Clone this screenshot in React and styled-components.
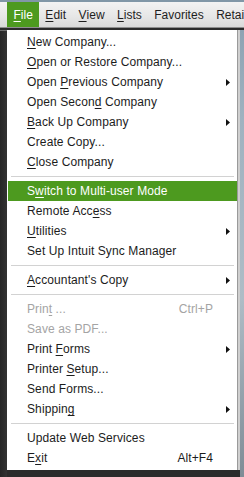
import React from "react";
import styled, { createGlobalStyle } from "styled-components";

const GlobalStyle = createGlobalStyle`
  html, body {
    margin: 0;
    padding: 0;
    background: #2b2b2b;
  }
`;

const menuBar = [
  { label: "File", key: "F", active: true },
  { label: "Edit", key: "E" },
  { label: "View", key: "V" },
  { label: "Lists", key: "L" },
  { label: "Favorites" },
  { label: "Retail" },
];

// each group is separated by a line
const groups = [
  [
    { label: "New Company...", key: 0 },
    { label: "Open or Restore Company...", key: 0 },
    { label: "Open Previous Company", key: 5, sub: true },
    { label: "Open Second Company", key: 10 },
    { label: "Back Up Company", key: 0, sub: true },
    { label: "Create Copy..." },
    { label: "Close Company", key: 0 },
  ],
  [
    { label: "Switch to Multi-user Mode", key: 1, selected: true },
    { label: "Remote Access", key: 10 },
    { label: "Utilities", key: 0, sub: true },
    { label: "Set Up Intuit Sync Manager" },
  ],
  [{ label: "Accountant's Copy", key: 0, sub: true }],
  [
    { label: "Print ...", key: 4, shortcut: "Ctrl+P", disabled: true },
    { label: "Save as PDF...", disabled: true },
    { label: "Print Forms", key: 6, sub: true },
    { label: "Printer Setup...", key: 8 },
    { label: "Send Forms..." },
    { label: "Shipping", key: 7, sub: true },
  ],
  [
    { label: "Update Web Services" },
    { label: "Exit", key: 1, shortcut: "Alt+F4" },
  ],
];

function Mnemonic({ text, index }) {
  if (index === undefined) return text;
  return (
    <>
      {text.slice(0, index)}
      <u>{text[index]}</u>
      {text.slice(index + 1)}
    </>
  );
}

const App = () => {
  return (
    <Screen>
      <GlobalStyle />
      <TopStrip />
      <MenuBar>
        {menuBar.map((m) => (
          <BarItem key={m.label} $active={m.active}>
            <Mnemonic text={m.label} index={m.key ? 0 : undefined} />
          </BarItem>
        ))}
      </MenuBar>
      <Body>
        <LeftEdge>
          <EdgeMark />
        </LeftEdge>
        <Panel>
          {groups.map((group, gi) => (
            <React.Fragment key={gi}>
              {gi > 0 && <Separator />}
              {group.map((item) => (
                <Item
                  key={item.label}
                  $selected={item.selected}
                  $disabled={item.disabled}
                >
                  <Label>
                    <Mnemonic text={item.label} index={item.key} />
                  </Label>
                  <Shortcut>{item.shortcut}</Shortcut>
                  <ArrowCell>
                    {item.sub && (
                      <svg width="4" height="7" viewBox="0 0 4 7">
                        <path d="M0 0 L4 3.5 L0 7 Z" fill="#111" />
                      </svg>
                    )}
                  </ArrowCell>
                </Item>
              ))}
            </React.Fragment>
          ))}
        </Panel>
        <RightEdge />
      </Body>
    </Screen>
  );
};

const Screen = styled.div`
  width: 244px;
  height: 477px;
  overflow: hidden;
  background: #2b2b2b;
  font-family: "Liberation Sans", Arial, sans-serif;
  font-size: 12px;
  display: flex;
  flex-direction: column;
`;

const TopStrip = styled.div`
  height: 2px;
  background: #8197a7;
`;

const MenuBar = styled.div`
  height: 25px;
  display: flex;
  align-items: stretch;
  padding-left: 7px;
  font-size: 12px;
  background: linear-gradient(#f3f3f3, #e6e6e6 60%, #d9d9d9);
  border-bottom: 1px solid #8e8e8e;
  white-space: nowrap;
  overflow: hidden;
`;

const BarItem = styled.div`
  display: flex;
  align-items: center;
  padding: 0 6px 0 6.5px;
  color: ${(p) => (p.$active ? "#ffffff" : "#1e1e1e")};
  background: ${(p) => (p.$active ? "#4d9a1f" : "transparent")};

  u {
    text-decoration-thickness: 1px;
    text-underline-offset: 2px;
  }
`;

const Body = styled.div`
  flex: 1;
  display: flex;
  align-items: flex-start;
  padding-top: 2px;
`;

const LeftEdge = styled.div`
  width: 7px;
  align-self: stretch;
  background: linear-gradient(90deg, #262626, #333333);
`;

const EdgeMark = styled.div`
  height: 1px;
  background: #6d6d6d;
`;

const Panel = styled.div`
  width: 229px;
  background: #ffffff;
  padding: 2px 0 2px 1px;
  border-right: 1px solid #9a9a9a;
  box-shadow: 2px 0 0 #cfcfcf;
`;

const Item = styled.div`
  height: 20px;
  display: grid;
  grid-template-columns: 1fr auto 24px;
  align-items: center;
  padding-left: 19px;
  letter-spacing: 0.1px;
  color: ${(p) =>
    p.$selected ? "#ffffff" : p.$disabled ? "#a4a4a4" : "#1c1c1c"};
  background: ${(p) => (p.$selected ? "#4d9a1f" : "transparent")};

  u {
    text-decoration-thickness: 1px;
    text-underline-offset: 2px;
  }
`;

const Label = styled.span`
  white-space: nowrap;
`;

const Shortcut = styled.span`
  white-space: nowrap;
`;

const ArrowCell = styled.span`
  display: flex;
  align-items: center;
  padding-left: 13px;
`;

const Separator = styled.div`
  height: 1px;
  margin: 4px 3px 4px 3px;
  background: #d2d2d2;
`;

const RightEdge = styled.div`
  flex: 1;
  align-self: stretch;
  margin-left: 2px;
  background: linear-gradient(#8ea3b3, #9fb2c0 20%, #aebcc6 60%, #7f8c96);
`;

export default App;
